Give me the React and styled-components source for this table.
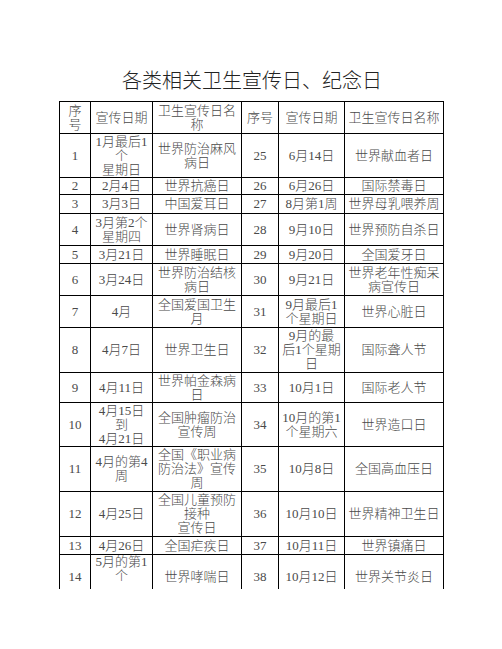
import React from "react";
import styled, { createGlobalStyle } from "styled-components";

const GlobalStyle = createGlobalStyle`
  html, body {
    margin: 0;
    padding: 0;
    background: #ffffff;
  }
  body {
    font-family: "Liberation Serif", "Noto Sans CJK SC", serif;
  }
`;

const columns = [31, 62, 89, 37, 66, 99];

const header = ["序<br>号", "宣传日期", "卫生宣传日名<br>称", "序号", "宣传日期", "卫生宣传日名称"];

const rows = [
  { h: 44, cells: ["1", "1月最后1<br>个<br>星期日", "世界防治麻风<br>病日", "25", "6月14日", "世界献血者日"] },
  { h: 17, cells: ["2", "2月4日", "世界抗癌日", "26", "6月26日", "国际禁毒日"] },
  { h: 19, cells: ["3", "3月3日", "中国爱耳日", "27", "8月第1周", "世界母乳喂养周"] },
  { h: 32, cells: ["4", "3月第2个<br>星期四", "世界肾病日", "28", "9月10日", "世界预防自杀日"] },
  { h: 18, cells: ["5", "3月21日", "世界睡眠日", "29", "9月20日", "全国爱牙日"] },
  { h: 32, cells: ["6", "3月24日", "世界防治结核<br>病日", "30", "9月21日", "世界老年性痴呆<br>病宣传日"] },
  { h: 32, cells: ["7", "4月", "全国爱国卫生<br>月", "31", "9月最后1<br>个星期日", "世界心脏日"] },
  { h: 45, cells: ["8", "4月7日", "世界卫生日", "32", "9月的最<br>后1个星期<br>日", "国际聋人节"] },
  { h: 30, cells: ["9", "4月11日", "世界帕金森病<br>日", "33", "10月1日", "国际老人节"] },
  { h: 44, cells: ["10", "4月15日<br>到<br>4月21日", "全国肿瘤防治<br>宣传周", "34", "10月的第1<br>个星期六", "世界造口日"] },
  { h: 45, cells: ["11", "4月的第4<br>周", "全国《职业病<br>防治法》宣传<br>周", "35", "10月8日", "全国高血压日"] },
  { h: 45, cells: ["12", "4月25日", "全国儿童预防<br>接种<br>宣传日", "36", "10月10日", "世界精神卫生日"] },
  { h: 18, cells: ["13", "4月26日", "全国疟疾日", "37", "10月11日", "世界镇痛日"] },
  { h: 44, cells: ["14", "5月的第1<br>个", "世界哮喘日", "38", "10月12日", "世界关节炎日"], topCell: 1 },
];

const Lines = ({ text }) => {
  const parts = text.split("<br>");
  return parts.map((p, i) => (
    <React.Fragment key={i}>
      {p}
      {i < parts.length - 1 && <br />}
    </React.Fragment>
  ));
};

export default function App() {
  return (
    <Page>
      <GlobalStyle />
      <Title>各类相关卫生宣传日、纪念日</Title>
      <TableClip>
        <Table>
          <colgroup>
            {columns.map((w, i) => (
              <col key={i} style={{ width: w }} />
            ))}
          </colgroup>
          <thead>
            <Row $h={32}>
              {header.map((t, i) => (
                <Cell key={i} as="th">
                  <Lines text={t} />
                </Cell>
              ))}
            </Row>
          </thead>
          <tbody>
            {rows.map((r, ri) => (
              <Row key={ri} $h={r.h}>
                {r.cells.map((t, ci) => (
                  <Cell key={ci} $top={r.topCell === ci}>
                    <Lines text={t} />
                  </Cell>
                ))}
              </Row>
            ))}
          </tbody>
        </Table>
      </TableClip>
    </Page>
  );
}

const Page = styled.div`
  width: 502px;
  height: 649px;
  padding-top: 68px;
  box-sizing: border-box;
  overflow: hidden;
`;

const Title = styled.h1`
  margin: 0 0 8px 0;
  text-align: center;
  font-family: "Noto Sans CJK SC", sans-serif;
  font-weight: 300;
  font-size: 20px;
  line-height: 24px;
  color: #222;
  padding-left: 2px;
`;

const TableClip = styled.div`
  width: 386px;
  height: 489px;
  margin: 0 auto;
  padding-left: 1px;
  padding-top: 1px;
  box-sizing: border-box;
  overflow: hidden;
`;

const Table = styled.table`
  width: 384px;
  table-layout: fixed;
  border-collapse: collapse;
`;

const Row = styled.tr`
  height: ${(p) => p.$h}px;
`;

const Cell = styled.td`
  border: 1px solid #000;
  padding: 0;
  text-align: center;
  vertical-align: ${(p) => (p.$top ? "top" : "middle")};
  font-family: "Liberation Serif", "Noto Sans CJK SC", serif;
  font-weight: 300;
  font-size: 13px;
  line-height: 14px;
  color: #4a4a4a;
  white-space: nowrap;
  overflow: hidden;
`;
